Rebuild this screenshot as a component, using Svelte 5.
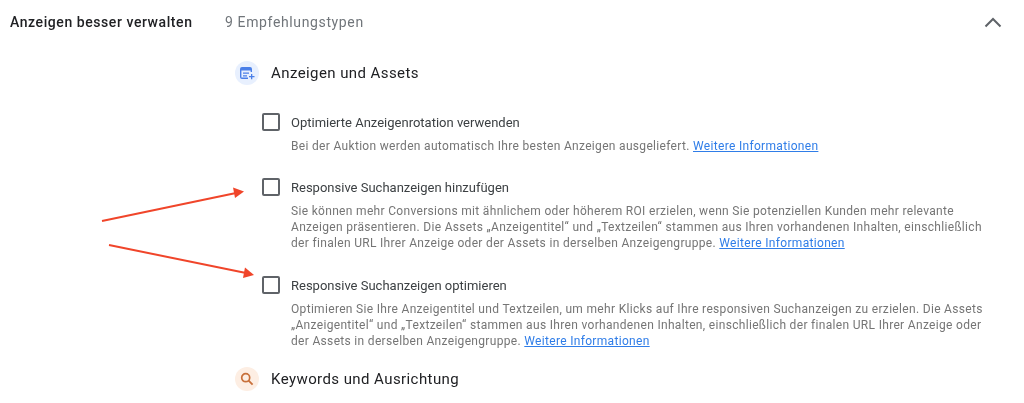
<script>
  const groups = [
    { title: 'Optimierte Anzeigenrotation verwenden', lines: ['Bei der Auktion werden automatisch Ihre besten Anzeigen ausgeliefert.'], cls: 'one' },
    { title: 'Responsive Suchanzeigen hinzufügen', lines: ['Sie können mehr Conversions mit ähnlichem oder höherem ROI erzielen, wenn Sie potenziellen Kunden mehr relevante', 'Anzeigen präsentieren. Die Assets „Anzeigentitel“ und „Textzeilen“ stammen aus Ihren vorhandenen Inhalten, einschließlich', 'der finalen URL Ihrer Anzeige oder der Assets in derselben Anzeigengruppe.'], cls: 'two' },
    { title: 'Responsive Suchanzeigen optimieren', lines: ['Optimieren Sie Ihre Anzeigentitel und Textzeilen, um mehr Klicks auf Ihre responsiven Suchanzeigen zu erzielen. Die Assets', '„Anzeigentitel“ und „Textzeilen“ stammen aus Ihren vorhandenen Inhalten, einschließlich der finalen URL Ihrer Anzeige oder', 'der Assets in derselben Anzeigengruppe.'], cls: 'three' }
  ];
</script>

<main class="page">
  <header class="head">
    <h1>Anzeigen besser verwalten</h1>
    <span class="count">9 Empfehlungstypen</span>
    <svg class="chev" width="18" height="11" viewBox="0 0 18 11"><path d="M1.500 9.500 9 2l7.500 7.500" fill="none" stroke="#5f6368" stroke-width="2"/></svg>
  </header>

  <section class="body">
    <div class="cat">
      <span class="badge blue">
        <svg width="16" height="14" viewBox="0 0 16 14"><path d="M1 3a2 2 0 0 1 2-2h8a2 2 0 0 1 2 2v3h-1.400V4.600H2.400V11.600H9V13H3a2 2 0 0 1-2-2z" fill="#4a7fe8"/><path d="M4 6.600h6v1.200H4zM4 9.200h4v1.200H4zM12 8h1.300v2H15.500v1.300H13.300V13.300H12V11.300H10V10h2z" fill="#4a7fe8"/></svg>
      </span>
      <h2>Anzeigen und Assets</h2>
    </div>

    {#each groups as g}
      <div class="item {g.cls}">
        <span class="box"></span>
        <div class="text">
          <div class="title">{g.title}</div>
          <p>{#each g.lines as l, i}{#if i > 0}<br />{/if}{l}{/each} <a href="#top">Weitere Informationen</a></p>
        </div>
      </div>
    {/each}

    <div class="cat last">
      <span class="badge orange">
        <svg width="14" height="14" viewBox="0 0 14 14"><circle cx="5.700" cy="5.700" r="4" fill="none" stroke="#c8703a" stroke-width="1.700"/><path d="m8.600 8.600 4 4" stroke="#c8703a" stroke-width="1.900"/></svg>
      </span>
      <h2>Keywords und Ausrichtung</h2>
    </div>
  </section>

  <svg class="arrows" width="160" height="110" viewBox="100 180 160 110">
    <path d="M102 221 236 193" stroke="#f0452a" stroke-width="2" fill="none"/>
    <path d="m244 191.500-11-4 2 10.500z" fill="#f0452a"/>
    <path d="M109 245 246 273" stroke="#f0452a" stroke-width="2" fill="none"/>
    <path d="m254 275-9-7.500-2 10.500z" fill="#f0452a"/>
  </svg>
</main>

<style>
  :global(body) { margin: 0; background: #fff; }
  .page { position: relative; width: 1024px; height: 403px; overflow: hidden; font-family: Roboto, "Liberation Sans", sans-serif; filter: blur(.35px); }
  .head { display: flex; align-items: center; height: 44px; padding: 0 22px 0 10px; }
  h1 { width: 215px; margin: 0; font-size: 14px; font-weight: 500; letter-spacing: .57px; color: #202124; }
  .count { flex: 1; font-size: 14px; letter-spacing: .63px; color: #70757a; }
  .body { padding: 17px 40px 0 235px; }
  .cat { display: flex; align-items: center; gap: 12px; height: 24px; }
  .cat h2 { margin: 0; font-size: 15px; font-weight: 400; letter-spacing: .42px; color: #202124; }
  .badge { display: flex; align-items: center; justify-content: center; width: 24px; height: 24px; border-radius: 50%; }
  .blue { background: #e8f0fe; }
  .orange { background: #fdeee3; }
  .item { display: flex; gap: 11px; margin-left: 27px; }
  .one { margin-top: 27px; }
  .two { margin-top: 23px; }
  .three { margin-top: 24px; }
  .last { margin-top: 18px; }
  .box { flex: none; box-sizing: border-box; width: 18px; height: 18px; margin-top: 1px; border: 2px solid #5f6368; border-radius: 2px; }
  .title { font-size: 13px; line-height: 22px; color: #3c4043; }
  p { margin: 4px 0 0; font-size: 12px; line-height: 16px; letter-spacing: .32px; color: #757575; white-space: nowrap; }
  a { color: #2f7de8; }
  .arrows { position: absolute; left: 100px; top: 180px; }
</style>
